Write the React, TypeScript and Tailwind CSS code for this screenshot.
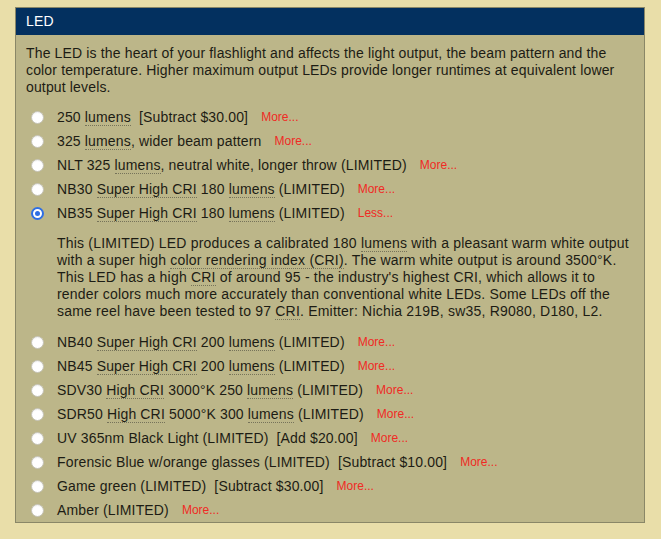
import React from "react";

type Part = string | { u: string };

type Option = {
  id: string;
  parts: Part[];
  price?: string;
  checked?: boolean;
};

const options: Option[] = [
  { id: "250", parts: ["250 ", { u: "lumens" }], price: "[Subtract $30.00]" },
  { id: "325", parts: ["325 ", { u: "lumens" }, ", wider beam pattern"] },
  { id: "nlt", parts: ["NLT 325 ", { u: "lumens" }, ", neutral white, longer throw (LIMITED)"] },
  { id: "nb30", parts: ["NB30 ", { u: "Super High CRI" }, " 180 ", { u: "lumens" }, " (LIMITED)"] },
  { id: "nb35", parts: ["NB35 ", { u: "Super High CRI" }, " 180 ", { u: "lumens" }, " (LIMITED)"], checked: true },
  { id: "nb40", parts: ["NB40 ", { u: "Super High CRI" }, " 200 ", { u: "lumens" }, " (LIMITED)"] },
  { id: "nb45", parts: ["NB45 ", { u: "Super High CRI" }, " 200 ", { u: "lumens" }, " (LIMITED)"] },
  { id: "sdv30", parts: ["SDV30 ", { u: "High CRI" }, " 3000°K 250 ", { u: "lumens" }, " (LIMITED)"] },
  { id: "sdr50", parts: ["SDR50 ", { u: "High CRI" }, " 5000°K 300 ", { u: "lumens" }, " (LIMITED)"] },
  { id: "uv", parts: ["UV 365nm Black Light (LIMITED)"], price: "[Add $20.00]" },
  { id: "forensic", parts: ["Forensic Blue w/orange glasses (LIMITED)"], price: "[Subtract $10.00]" },
  { id: "green", parts: ["Game green (LIMITED)"], price: "[Subtract $30.00]" },
  { id: "amber", parts: ["Amber (LIMITED)"] },
];

function Abbr({ children }: { children: React.ReactNode }) {
  return <span className="border-b border-dotted border-[#76735a]">{children}</span>;
}

function Radio({ checked }: { checked?: boolean }) {
  if (checked) {
    return (
      <span className="flex h-[13px] w-[13px] shrink-0 items-center justify-center rounded-full border-2 border-[#2f6fe4] bg-white">
        <span className="h-[5px] w-[5px] rounded-full bg-[#2f6fe4]" />
      </span>
    );
  }
  return (
    <span className="h-[13px] w-[13px] shrink-0 rounded-full border border-[#c4c2b4] bg-white shadow-[inset_0_1px_1px_rgba(0,0,0,0.06)]" />
  );
}

function Row({ opt }: { opt: Option }) {
  return (
    <div className="flex h-[24px] items-center">
      <span className="ml-[5px] flex w-[13px] justify-center">
        <Radio checked={opt.checked} />
      </span>
      <span className="ml-[13px] whitespace-nowrap">
        {opt.parts.map((p, i) =>
          typeof p === "string" ? <span key={i}>{p}</span> : <Abbr key={i}>{p.u}</Abbr>
        )}
        {opt.price ? (
          <>
            {"\u00a0\u00a0"}
            {opt.price}
          </>
        ) : null}
      </span>
      <span className="ml-[13px] text-[12px] tracking-normal text-[#f02a24]">
        {opt.checked ? "Less..." : "More..."}
      </span>
    </div>
  );
}

export default function App() {
  return (
    <div
      className="h-[539px] w-[661px] overflow-hidden bg-[#e9dea9] pl-[15px] pt-[7px] text-[14px] leading-[17px] tracking-[0.15px] text-[#1c1c14]"
      style={{ fontFamily: '"Liberation Sans", Arial, sans-serif' }}
    >
      <div className="w-[630px] border border-[#8a8767] bg-[#bcb689]">
        <div className="flex h-[27px] items-center bg-[#03305f] pl-[10px] text-[14px] text-white">LED</div>
        <div className="px-[10px]">
          <p className="whitespace-nowrap pt-[10px] pb-[9px]">
            The LED is the heart of your flashlight and affects the light output, the beam pattern and the
            <br />
            color temperature. Higher maximum output LEDs provide longer runtimes at equivalent lower
            <br />
            output levels.
          </p>
          <div>
            {options.map((opt) => (
              <React.Fragment key={opt.id}>
                <Row opt={opt} />
                {opt.checked ? (
                  <p className="whitespace-nowrap py-[10px] pl-[31px] tracking-[0.2px]">
                    This (LIMITED) LED produces a calibrated 180 <Abbr>lumens</Abbr> with a pleasant warm white output
                    <br />
                    with a super high <Abbr>color rendering index (CRI)</Abbr>. The warm white output is around 3500°K.
                    <br />
                    This LED has a high <Abbr>CRI</Abbr> of around 95 - the industry's highest CRI, which allows it to
                    <br />
                    render colors much more accurately than conventional white LEDs. Some LEDs off the
                    <br />
                    same reel have been tested to 97 <Abbr>CRI</Abbr>. Emitter: Nichia 219B, sw35, R9080, D180, L2.
                  </p>
                ) : null}
              </React.Fragment>
            ))}
          </div>
        </div>
      </div>
    </div>
  );
}
